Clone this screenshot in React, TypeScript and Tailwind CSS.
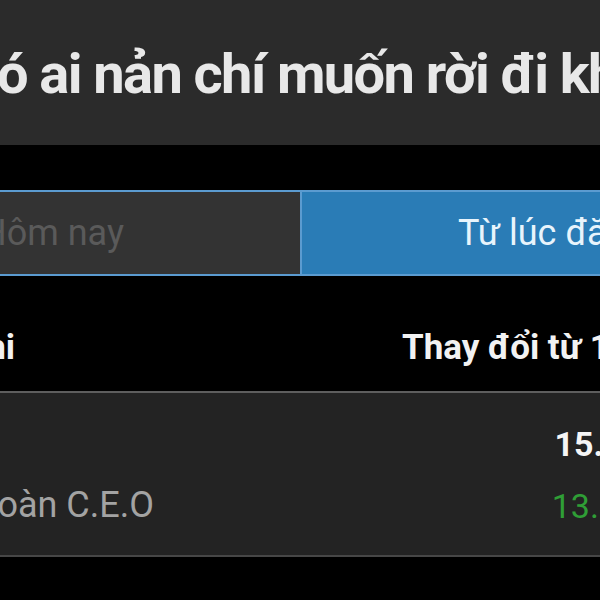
export default function App() {
  return (
    <div
      className="w-[600px] h-[600px] overflow-hidden bg-black"
      style={{ fontFamily: "Roboto, 'Noto Sans', sans-serif" }}
    >
      {/* post title band */}
      <div className="h-[145px] bg-[#2b2b2b] pt-[46px]">
        <div className="-ml-[38px] whitespace-nowrap text-[56px] leading-none font-bold tracking-[-1.6px] text-[#e8e8e8]">
          Có ai nản chí muốn rời đi khỏi nhóm không?
        </div>
      </div>

      <div className="h-[45px]" />

      {/* tabs */}
      <div className="flex h-[86px] border-y-2 border-[#5b9bd0]">
        <div className="w-[300px] shrink-0 overflow-hidden bg-[#333333] pt-[23px]">
          <div className="-ml-[19px] whitespace-nowrap text-[36px] leading-none text-[#5a5a5a]">
            Hôm nay
          </div>
        </div>
        <div className="flex-1 overflow-hidden border-l-2 border-[#5b9bd0] bg-[#2a7cb6] pl-[156px] pt-[23px]">
          <div className="whitespace-nowrap text-[36px] leading-none text-[#e8f4fc]">
            Từ lúc đăng nhập
          </div>
        </div>
      </div>

      {/* table header */}
      <div className="flex h-[115px] pt-[54px] text-[35px] leading-none font-bold text-[#f2f2f2]">
        <div className="flex w-[15px] shrink-0 justify-end whitespace-nowrap">Khoản chi</div>
        <div className="ml-[387px] whitespace-nowrap">Thay đổi từ 1 năm</div>
      </div>

      {/* table row */}
      <div className="flex h-[166px] border-y-2 border-t-[#5e5e5e] border-b-[#474747] bg-[#232323]">
        <div className="flex w-[154px] shrink-0 flex-col items-end pt-[94px]">
          <div className="whitespace-nowrap text-[36px] leading-none text-[#a3a3a3]">
            Tập đoàn C.E.O
          </div>
        </div>
        <div className="ml-[246px] flex w-[262px] shrink-0 flex-col items-end pt-[34px] text-[34px] leading-none">
          <div className="whitespace-nowrap font-bold text-[#f5f5f5]">15.300</div>
          <div className="mt-[28px] whitespace-nowrap text-[#2f9e36]">13.57%</div>
        </div>
      </div>
    </div>
  );
}
